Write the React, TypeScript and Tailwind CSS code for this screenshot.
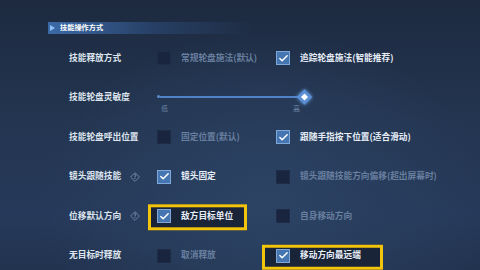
import { Check } from "lucide-react";

const font = { fontFamily: '"Noto Sans CJK SC", "Noto Sans", sans-serif' };

type Opt = { text: string; checked: boolean; mark?: "a" | "b" };

const rows: { label: string; help?: boolean; slider?: boolean; opts?: Opt[] }[] = [
  {
    label: "技能释放方式",
    opts: [
      { text: "常规轮盘施法(默认)", checked: false },
      { text: "追踪轮盘施法(智能推荐)", checked: true },
    ],
  },
  { label: "技能轮盘灵敏度", slider: true },
  {
    label: "技能轮盘呼出位置",
    opts: [
      { text: "固定位置(默认)", checked: false },
      { text: "跟随手指按下位置(适合滑动)", checked: true },
    ],
  },
  {
    label: "镜头跟随技能",
    help: true,
    opts: [
      { text: "镜头固定", checked: true },
      { text: "镜头跟随技能方向偏移(超出屏幕时)", checked: false },
    ],
  },
  {
    label: "位移默认方向",
    help: true,
    opts: [
      { text: "敌方目标单位", checked: true, mark: "a" },
      { text: "自身移动方向", checked: false },
    ],
  },
  {
    label: "无目标时释放",
    opts: [
      { text: "取消释放", checked: false },
      { text: "移动方向最远端", checked: true, mark: "b" },
    ],
  },
];

function Box({ checked }: { checked: boolean }) {
  return checked ? (
    <div className="relative z-10 flex h-[14px] w-[14px] shrink-0 items-center justify-center border border-[#7fa7d8] bg-[#4676b2]">
      <Check size={11} strokeWidth={3.2} className="text-white" />
    </div>
  ) : (
    <div className="relative z-10 h-[14px] w-[14px] shrink-0 border border-[#1e2c47] bg-[#19253f]" />
  );
}

function Help() {
  return (
    <svg width="10" height="10" viewBox="0 0 10 10" className="ml-[9px]">
      <polygon points="5,0.6 9.4,5 5,9.4 0.6,5" fill="none" stroke="#7389a8" strokeWidth="0.9" />
      <text x="5" y="7" textAnchor="middle" fontSize="5.5" fill="#8296b3" fontWeight="700">
        ?
      </text>
    </svg>
  );
}

function Option({ o, w }: { o: Opt; w: string }) {
  return (
    <div className={`relative flex h-full items-center gap-[10px] ${w}`}>
      {o.mark === "a" && (
        <div className="absolute left-[-9px] top-1/2 h-[26px] w-[99px] -translate-y-[45%] border-[3px] border-[#f2c40c] bg-[#1a2438]" />
      )}
      {o.mark === "b" && (
        <div className="absolute left-[-14px] top-1/2 h-[25px] w-[121px] -translate-y-[45%] border-[3px] border-[#f2c40c] bg-[#1a2438]" />
      )}
      <Box checked={o.checked} />
      <span
        className={`relative z-10 whitespace-nowrap text-[8.7px] font-bold leading-none ${
          o.checked ? "text-[#e6edf7]" : "text-[#687f9f]"
        }`}
      >
        {o.text}
      </span>
    </div>
  );
}

function Slider() {
  return (
    <div className="flex w-[155px] flex-col pt-[10px]">
      <div className="relative flex h-[6px] items-center">
        <div className="h-[3px] w-[3px] rounded-full bg-[#5e8fd0]" />
        <div className="h-[1.5px] w-[145px] bg-[#4f82c6]" />
        <div className="absolute left-[142px] top-1/2 flex h-[11px] w-[11px] -translate-y-1/2 rotate-45 items-center justify-center bg-[#5a8fd6] shadow-[0_0_4px_#6aa3e8]">
          <div className="h-[5px] w-[5px] bg-white" />
        </div>
      </div>
      <div className="mt-[5px] flex w-[143px] justify-between pl-[4px] text-[7px] leading-none text-[#6d84a4]">
        <span>低</span>
        <span>高</span>
      </div>
    </div>
  );
}

export default function App() {
  return (
    <div
      style={font}
      className="relative h-[270px] w-[480px] overflow-hidden bg-[radial-gradient(ellipse_at_55%_75%,#2c4364_0%,#24375300_60%),linear-gradient(180deg,#1d2a40_0%,#233550_45%,#26395a_80%,#22334f_100%)]"
    >
      <div className="ml-[48px] mt-[22px] flex h-[12px] w-[205px] items-center bg-gradient-to-r from-[#3c6aa8] via-[#2d4d7c]/60 to-transparent">
        <div className="ml-[2px] h-0 w-0 border-y-[3px] border-l-[5px] border-y-transparent border-l-[#8fc0f5]" />
        <span className="ml-[5px] text-[7.2px] font-bold leading-none text-white">技能操作方式</span>
      </div>

      <div className="ml-[69px] mt-[4.5px] flex flex-col">
        {rows.map((r) => (
          <div key={r.label} className="flex h-[39.5px] items-center">
            <div className="flex w-[88px] items-center">
              <span className="whitespace-nowrap text-[8.7px] font-bold leading-none text-[#dde4ee]">
                {r.label}
              </span>
              {r.help && <Help />}
            </div>
            {r.slider ? (
              <Slider />
            ) : (
              <>
                <Option o={r.opts![0]} w="w-[119px]" />
                <Option o={r.opts![1]} w="" />
              </>
            )}
          </div>
        ))}
      </div>
    </div>
  );
}
